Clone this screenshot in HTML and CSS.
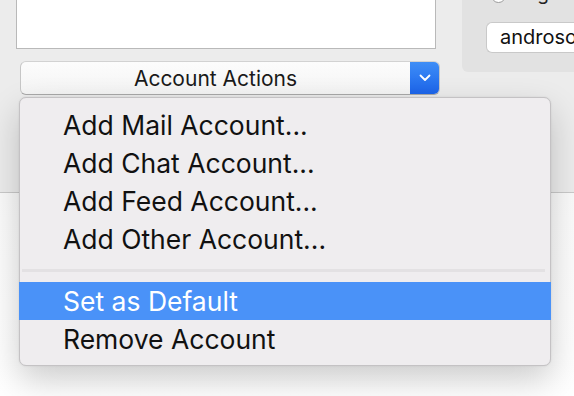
FILE: index.html
```html
<!DOCTYPE html>
<html>
<head>
<meta charset="utf-8">
<link rel="stylesheet" href="styles.css">
</head>
<body>
<div class="window">
  <div class="left">
    <div class="listbox"></div>
    <div class="popup">
      <span class="popup-label">Account Actions</span>
      <span class="popup-arrow">
        <svg width="12" height="8" viewBox="0 0 12 8"><path d="M1.5 1.5 L6 6 L10.5 1.5" fill="none" stroke="#fff" stroke-width="1.8" stroke-linecap="round" stroke-linejoin="round"/></svg>
      </span>
    </div>
  </div>
  <div class="right">
    <div class="group">
      <div class="radio-row"><span class="radio"></span><span class="radio-label">Log</span></div>
      <div class="field">androsoft</div>
    </div>
  </div>
</div>
<div class="menu">
  <div class="item">Add Mail Account...</div>
  <div class="item">Add Chat Account...</div>
  <div class="item">Add Feed Account...</div>
  <div class="item">Add Other Account...</div>
  <div class="sep"></div>
  <div class="item selected">Set as Default</div>
  <div class="item">Remove Account</div>
</div>
</body>
</html>
```
FILE: styles.css
```css
html, body {
  margin: 0;
  padding: 0;
}
body {
  width: 574px;
  height: 396px;
  overflow: hidden;
  background: linear-gradient(#efefef, #fbfbfb 55%, #ffffff);
  font-family: Inter, "Liberation Sans", sans-serif;
  position: relative;
}
.window {
  height: 192px;
  background: #ececec;
  border-bottom: 1px solid #c9c9c9;
  display: flex;
}
.left {
  width: 446px;
  padding-left: 16px;
  flex: none;
}
.listbox {
  width: 418px;
  height: 48px;
  background: #fff;
  border: 1px solid #b9b9b9;
  border-top: none;
}
.popup {
  margin-top: 12px;
  margin-left: 4px;
  width: 420px;
  height: 34px;
  box-sizing: border-box;
  border-radius: 6px;
  background: linear-gradient(#fcfcfc, #f4f4f4);
  border: 1px solid #c6c6c6;
  border-top-color: #d2d2d2;
  border-bottom-color: #a9a9a9;
  display: flex;
  align-items: stretch;
  overflow: hidden;
}
.popup-label {
  flex: 1;
  display: flex;
  align-items: center;
  justify-content: center;
  font-size: 21px;
  color: #1a1a1a;
  padding-top: 1px;
}
.popup-arrow {
  width: 30px;
  background: linear-gradient(#3f8ff7, #1b63ea);
  display: flex;
  align-items: center;
  justify-content: center;
  margin: -1px -1px -1px 0;
}
.right {
  flex: 1;
}
.group {
  height: 72px;
  background: #e2e2e2;
  border-radius: 0 0 0 6px;
  padding-left: 24px;
  overflow: hidden;
}
.radio-row {
  display: flex;
  align-items: flex-end;
  gap: 9px;
  height: 20px;
  margin-top: -16px;
  padding-left: 5px;
}
.radio {
  width: 13px;
  height: 13px;
  border-radius: 50%;
  background: #fff;
  border: 1px solid #9a9a9a;
  flex: none;
  margin-bottom: 1px;
}
.radio-label {
  font-size: 19px;
  line-height: 20px;
  color: #222;
}
.field {
  margin-top: 18px;
  height: 31px;
  box-sizing: border-box;
  background: #fff;
  border: 1px solid #c9c9c9;
  border-right: none;
  border-radius: 6px 0 0 6px;
  padding-left: 13px;
  font-size: 20px;
  line-height: 29px;
  color: #111;
  white-space: nowrap;
}
.menu {
  position: absolute;
  left: 19px;
  top: 97px;
  width: 532px;
  height: 269px;
  box-sizing: border-box;
  background: #efedef;
  border: 1px solid #c4c2c4;
  border-radius: 7px;
  padding-top: 8px;
  box-shadow: 0 14px 34px rgba(0, 0, 0, 0.2), 0 0 2px rgba(0, 0, 0, 0.1);
}
.item {
  height: 38px;
  line-height: 38px;
  padding-left: 43px;
  font-size: 26.5px;
  color: #111;
}
.item.selected {
  background: #4a92f8;
  color: #fff;
  margin: 0 -1px;
  padding-left: 44px;
}
.sep {
  height: 24px;
  display: flex;
  align-items: center;
  padding: 0 5px 0 2px;
}
.sep::before {
  content: "";
  flex: 1;
  height: 3px;
  background: #e3e1e3;
}
```
